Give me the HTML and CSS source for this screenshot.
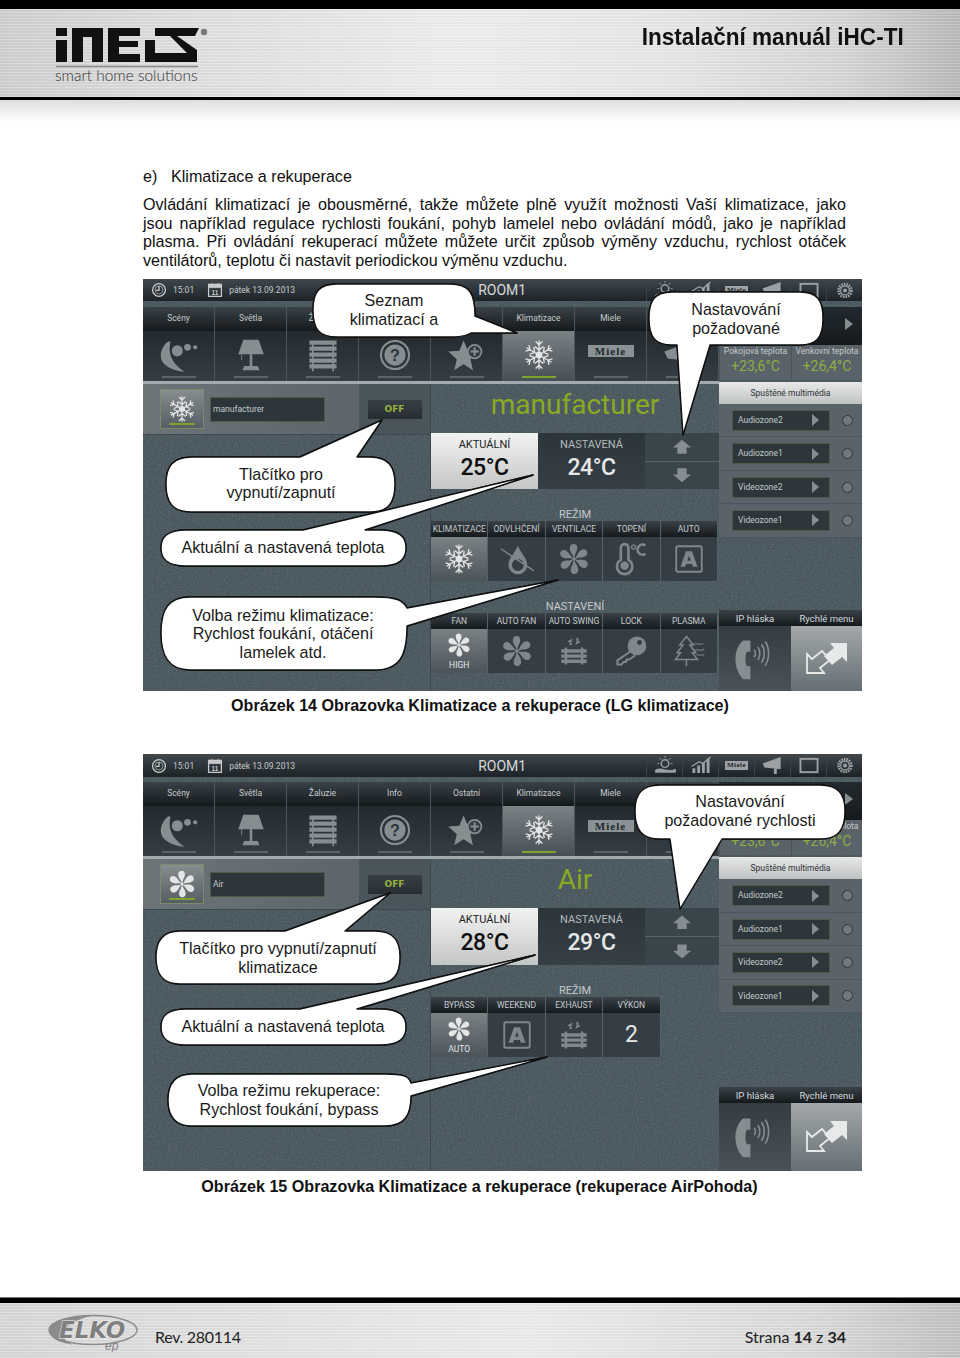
FILE: index.html
```html
<!DOCTYPE html>
<html>
  <head>
    <title>Instalační manuál iHC-TI</title>
    <link rel="stylesheet" href="styles.css">
  </head>
  <body>
    <svg class="defs" xmlns="http://www.w3.org/2000/svg">
      <filter id="grain" x="0" y="0" width="100%" height="100%">
        <feTurbulence type="fractalNoise" baseFrequency=".55" numOctaves="2" seed="4"/>
        <feColorMatrix values="0 0 0 0 .12  0 0 0 0 .15  0 0 0 0 .17  0 0 0 2 -.9"/>
      </filter>
      <g id="flake-arm"><path d="M20 20V3M20 8l-4-4M20 8l4-4M20 14l-5-4M20 14l5-4" fill="none" stroke="currentColor" stroke-width="1.6"/></g>
      <symbol id="i-flake" viewBox="0 0 40 40">
        <use href="#flake-arm"/><use href="#flake-arm" transform="rotate(60 20 20)"/><use href="#flake-arm" transform="rotate(120 20 20)"/>
        <use href="#flake-arm" transform="rotate(180 20 20)"/><use href="#flake-arm" transform="rotate(240 20 20)"/><use href="#flake-arm" transform="rotate(300 20 20)"/>
        <circle cx="20" cy="20" r="4" fill="currentColor"/>
      </symbol>
      <g id="fan-petal"><path d="M20 19C19 15 15 12 15 7 15 3 19 1 22 3 25 5 24 10 22 13 21 15 21 17 20 19Z" fill="currentColor"/></g>
      <symbol id="i-fan" viewBox="0 0 40 40">
        <use href="#fan-petal"/><use href="#fan-petal" transform="rotate(60 20 20)"/><use href="#fan-petal" transform="rotate(120 20 20)"/>
        <use href="#fan-petal" transform="rotate(180 20 20)"/><use href="#fan-petal" transform="rotate(240 20 20)"/><use href="#fan-petal" transform="rotate(300 20 20)"/>
        <circle cx="20" cy="20" r="2" fill="currentColor"/>
      </symbol>
      <symbol id="i-scene" viewBox="0 0 48 40">
        <path d="M11 4C2 12 0 22 6 30 12 36 21 39 31 40 19 32 10 22 14 4Z" fill="currentColor"/>
        <circle cx="22" cy="15" r="6.5" fill="currentColor"/><circle cx="34" cy="11" r="4" fill="currentColor"/><circle cx="43" cy="11" r="2.5" fill="currentColor"/>
      </symbol>
      <symbol id="i-lamp" viewBox="0 0 40 40">
        <path d="M11 2H29L35 19H5Z" fill="currentColor"/><path d="M18.5 19H21.5V33H18.5Z" fill="currentColor"/><path d="M12 33H28L30 38H10Z" fill="currentColor"/>
        <path d="M9 19V26" stroke="currentColor" fill="none"/>
      </symbol>
      <symbol id="i-blinds" viewBox="0 0 40 40">
        <path d="M4 3H36V8H4ZM4 10H36V15H4ZM4 17H36V22H4ZM4 24H36V29H4ZM4 31H36V36H4ZM7 3H9V39H7ZM31 3H33V39H31Z" fill="currentColor"/>
      </symbol>
      <symbol id="i-help" viewBox="0 0 40 40">
        <circle cx="20" cy="20" r="16.5" fill="none" stroke="currentColor" stroke-width="2.5"/>
        <circle cx="20" cy="20" r="12.5" fill="currentColor"/>
        <text x="20" y="27" text-anchor="middle" class="help-mark">?</text>
      </symbol>
      <symbol id="i-star" viewBox="0 0 48 40">
        <path d="M20 3L25 15 38 16 28 25 31 38 20 31 9 38 12 25 2 16 15 15Z" fill="currentColor"/>
        <circle cx="33" cy="16" r="8" fill="#333c42" stroke="currentColor" stroke-width="2"/>
        <path d="M33 11V21M28 16H38" stroke="currentColor" stroke-width="2.4"/>
      </symbol>
      <symbol id="i-drop" viewBox="0 0 40 40">
        <path d="M21 4C17 14 10 19 10 27A11 11 0 0 0 32 27C32 19 25 14 21 4ZM21 20A7 7 0 1 1 21 34 7 7 0 0 1 21 20Z" fill="currentColor" fill-rule="evenodd"/>
        <path d="M1 8L40 34" stroke="currentColor" stroke-width="1.6"/>
      </symbol>
      <symbol id="i-thermo" viewBox="0 0 40 40">
        <path d="M8 7A4.5 4.5 0 0 1 17 7V21A9 9 0 1 1 8 21Z" fill="none" stroke="currentColor" stroke-width="3"/>
        <circle cx="12.5" cy="28" r="5" fill="currentColor"/>
        <circle cx="23" cy="6" r="2.3" fill="none" stroke="currentColor" stroke-width="1.6"/>
        <path d="M37 4A6 6 0 1 0 37 14" fill="none" stroke="currentColor" stroke-width="3"/>
        <path d="M20 17V18M19 21V22" stroke="currentColor" stroke-width="1.2"/>
      </symbol>
      <symbol id="i-auto" viewBox="0 0 40 40">
        <rect x="5" y="5" width="30" height="30" rx="2" fill="none" stroke="currentColor" stroke-width="2.2"/>
        <path d="M16.5 11H23.5L30 29H24.5L23.5 26H16.5L15.5 29H10ZM20 16L18 22H22Z" fill="currentColor" fill-rule="evenodd"/>
      </symbol>
      <symbol id="i-swing" viewBox="0 0 40 40">
        <path d="M5 18H35V22H5ZM5 24H35V28H5ZM5 30H35V34H5ZM9 16H12V36H9ZM28 16H31V36H28Z" fill="currentColor"/>
        <path d="M15 13L17 7 13 9M15 7L17 13M25 5L23 11 27 9M25 11L23 5" fill="none" stroke="currentColor" stroke-width="1.6"/>
      </symbol>
      <symbol id="i-key" viewBox="0 0 40 40">
        <path d="M20 20L4 31V36H9L11 33H14L15 30H18L25 25" fill="none" stroke="currentColor" stroke-width="2.4"/>
        <circle cx="27" cy="14" r="11" fill="currentColor"/><circle cx="30" cy="10" r="2.8" fill="#333c42"/>
      </symbol>
      <symbol id="i-tree" viewBox="0 0 40 40">
        <path d="M17 3L9 13H13L6 22H10L4 30H30L24 22H28L21 13H25ZM17 30V38" fill="none" stroke="currentColor" stroke-width="1.8"/>
        <path d="M25 12C29 10 32 14 37 11M27 19C31 17 33 21 38 18M29 25C32 23 34 27 38 24" fill="none" stroke="currentColor" stroke-width="1.3"/>
      </symbol>
      <symbol id="i-phone" viewBox="0 0 50 46">
        <path d="M12 3C1 13 1 33 12 45H20V31H16C14 26 14 20 16 15H20V3Z" fill="currentColor"/>
        <path d="M24 13C26 15 26 19 24 21M28 10C31 14 31 20 28 24M32 7C36 12 36 22 32 27M36 4C41 11 41 23 36 30" fill="none" stroke="currentColor" stroke-width="1.7"/>
      </symbol>
      <symbol id="i-expand" viewBox="804 636 46 46">
        <path d="M847 643H830L834 648 824 656 832 665 842 657 847 662Z" fill="#e8eaea"/>
        <path d="M807 673H824L820 668 830 660 822 651 812 659 807 654Z" fill="none" stroke="#e8eaea" stroke-width="1.8"/>
      </symbol>
      <symbol id="i-sun" viewBox="0 0 24 20">
        <circle cx="12" cy="8" r="4" fill="none" stroke="currentColor" stroke-width="1.5"/>
        <path d="M12 0V2M4 8H6M18 8H20M6 2L8 4M18 2L16 4M2 15C8 11 14 18 23 14V17H2Z" fill="currentColor" stroke="currentColor"/>
      </symbol>
      <symbol id="i-chart" viewBox="0 0 24 20">
        <path d="M3 18V13H6V18ZM8 18V10H11V18ZM13 18V7H16V18ZM18 18V3H21V18Z" fill="currentColor"/>
        <path d="M2 11L10 6 14 8 22 1" fill="none" stroke="currentColor" stroke-width="1.4"/>
      </symbol>
      <symbol id="i-horn" viewBox="0 0 24 20">
        <path d="M1 8L20 1V14L3 12Z" fill="currentColor"/><path d="M13 13L16 13V19H13Z" fill="currentColor"/>
      </symbol>
      <symbol id="i-window" viewBox="0 0 24 20">
        <rect x="3" y="3" width="18" height="14" fill="none" stroke="currentColor" stroke-width="2"/>
      </symbol>
      <symbol id="i-gear" viewBox="0 0 24 24">
        <circle cx="12" cy="12" r="8" fill="none" stroke="currentColor" stroke-width="3.5" stroke-dasharray="2 1.2"/>
        <circle cx="12" cy="12" r="5.5" fill="none" stroke="currentColor" stroke-width="1.5"/>
        <circle cx="12" cy="12" r="2.5" fill="currentColor"/>
      </symbol>
      <symbol id="i-clock" viewBox="0 0 20 20">
        <circle cx="10" cy="10" r="8" fill="none" stroke="currentColor" stroke-width="1.6"/>
        <circle cx="10" cy="10" r="5" fill="none" stroke="currentColor" stroke-width=".8"/>
        <path d="M10 5V10.5H6" fill="none" stroke="currentColor" stroke-width="1.6"/>
      </symbol>
      <symbol id="i-calendar" viewBox="0 0 20 20">
        <path d="M2 3H18V18H2Z" fill="none" stroke="currentColor" stroke-width="1.6"/>
        <path d="M2 3H18V7H2ZM6 1V4M14 1V4" fill="currentColor" stroke="currentColor"/>
        <text x="10" y="16" text-anchor="middle" class="calendar-day">11</text>
      </symbol>
    </svg>

    <header class="page-header">
      <svg class="inels-logo" viewBox="56 26 156 58" width="156" height="58">
        <path d="M56 28H67V36H56ZM56 40H67V62H56Z" fill="#111"/>
        <path d="M72 28H103V62H92V37H83V62H72Z" fill="#111"/>
        <path d="M108 28H140V36H119V41H138V47H119V54H140V62H108Z" fill="#111"/>
        <path d="M155 28H199L195 36H177L197 50V62H145V40H155V53H187L170 36H155Z" fill="#111"/>
        <circle cx="204" cy="32" r="3.2" fill="#777"/>
        <path d="M56 66.5H198" stroke="#8a8a8a" stroke-width="1.6"/>
      </svg>
      <span class="logo-tagline">smart home solutions</span>
      <h1 class="doc-title">Instalační manuál iHC-TI</h1>
    </header>
    <div class="header-fade"></div>

    <main class="page">
      <h2 class="section-title"><span class="section-num">e)</span>Klimatizace a rekuperace</h2>
      <p class="intro">
        <span class="intro-line">Ovládání klimatizací je obousměrné, takže můžete plně využít možnosti Vaší klimatizace, jako</span>
        <span class="intro-line">jsou například regulace rychlosti foukání, pohyb lamelel nebo ovládání módů, jako je například</span>
        <span class="intro-line">plasma. Při ovládání rekuperací můžete můžete určit způsob výměny vzduchu, rychlost otáček</span>
        <span class="intro-last">ventilátorů, teplotu či nastavit periodickou výměnu vzduchu.</span>
      </p>

      <section class="screen screen-one">
        <svg class="noise"><rect width="100%" height="100%" filter="url(#grain)"/></svg>
        <div class="topbar">
          <svg class="top-icon"><use href="#i-clock"/></svg><span class="top-time">15:01</span>
          <svg class="top-icon"><use href="#i-calendar"/></svg><span class="top-date">pátek 13.09.2013</span>
          <span class="top-room">ROOM1</span>
          <div class="top-actions">
            <span class="top-action"><svg><use href="#i-sun"/></svg></span>
            <span class="top-action"><svg><use href="#i-chart"/></svg></span>
            <span class="top-action"><span class="miele-small">Miele</span></span>
            <span class="top-action"><svg><use href="#i-horn"/></svg></span>
            <span class="top-action"><svg><use href="#i-window"/></svg></span>
            <span class="top-action"><svg><use href="#i-gear"/></svg></span>
          </div>
        </div>
        <div class="screen-body">
          <div class="screen-main">
            <div class="tabs">
              <div class="tab"><div class="tab-head">Scény</div><div class="tab-body"><svg class="tab-icon"><use href="#i-scene"/></svg><i class="tab-bar"></i></div></div>
              <div class="tab"><div class="tab-head">Světla</div><div class="tab-body"><svg class="tab-icon"><use href="#i-lamp"/></svg><i class="tab-bar"></i></div></div>
              <div class="tab"><div class="tab-head">Žaluzie</div><div class="tab-body"><svg class="tab-icon"><use href="#i-blinds"/></svg><i class="tab-bar"></i></div></div>
              <div class="tab"><div class="tab-head"></div><div class="tab-body"><svg class="tab-icon"><use href="#i-help"/></svg><i class="tab-bar"></i></div></div>
              <div class="tab"><div class="tab-head"></div><div class="tab-body"><svg class="tab-icon"><use href="#i-star"/></svg><i class="tab-bar"></i></div></div>
              <div class="tab tab-active"><div class="tab-head">Klimatizace</div><div class="tab-body"><svg class="tab-icon"><use href="#i-flake"/></svg><i class="tab-bar"></i></div></div>
              <div class="tab"><div class="tab-head">Miele</div><div class="tab-body"><span class="miele-logo">Miele</span><i class="tab-bar"></i></div></div>
              <div class="tab"><div class="tab-head"></div><div class="tab-body"><svg class="tab-icon"><use href="#i-horn"/></svg><i class="tab-bar"></i></div></div>
            </div>
            <div class="divider"></div>
            <div class="content">
              <div class="content-left">
                <div class="selector">
                  <div class="selector-device">
                    <div class="device-btn"><svg><use href="#i-flake"/></svg><i class="device-bar"></i></div>
                    <div class="device-name">manufacturer</div>
                  </div>
                  <div class="selector-power"><span class="off-btn">OFF</span></div>
                </div>
              </div>
              <div class="content-mid">
                <div class="unit-title">manufacturer</div>
                <div class="temps">
                  <div class="temp temp-current"><span class="temp-label">AKTUÁLNÍ</span><span class="temp-value">25°C</span></div>
                  <div class="temp temp-set"><span class="temp-label">NASTAVENÁ</span><span class="temp-value">24°C</span></div>
                  <div class="temp-arrows">
                    <div class="arrow-btn"><i class="arrow-up"></i></div>
                    <div class="arrow-btn"><i class="arrow-down"></i></div>
                  </div>
                </div>
                <div class="group-label">REŽIM</div>
                <div class="modes">
                  <div class="mode mode-active"><div class="mode-head">KLIMATIZACE</div><div class="mode-body"><svg class="mode-icon"><use href="#i-flake"/></svg></div></div>
                  <div class="mode"><div class="mode-head">ODVLHČENÍ</div><div class="mode-body"><svg class="mode-icon"><use href="#i-drop"/></svg></div></div>
                  <div class="mode"><div class="mode-head">VENTILACE</div><div class="mode-body"><svg class="mode-icon"><use href="#i-fan"/></svg></div></div>
                  <div class="mode"><div class="mode-head">TOPENÍ</div><div class="mode-body"><svg class="mode-icon"><use href="#i-thermo"/></svg></div></div>
                  <div class="mode"><div class="mode-head">AUTO</div><div class="mode-body"><svg class="mode-icon"><use href="#i-auto"/></svg></div></div>
                </div>
                <div class="group-label">NASTAVENÍ</div>
                <div class="modes">
                  <div class="mode mode-active"><div class="mode-head">FAN</div><div class="mode-body"><svg class="mode-icon mode-icon-small"><use href="#i-fan"/></svg><span class="mode-note">HIGH</span></div></div>
                  <div class="mode"><div class="mode-head">AUTO FAN</div><div class="mode-body"><svg class="mode-icon"><use href="#i-fan"/></svg></div></div>
                  <div class="mode"><div class="mode-head">AUTO SWING</div><div class="mode-body"><svg class="mode-icon"><use href="#i-swing"/></svg></div></div>
                  <div class="mode"><div class="mode-head">LOCK</div><div class="mode-body"><svg class="mode-icon"><use href="#i-key"/></svg></div></div>
                  <div class="mode"><div class="mode-head">PLASMA</div><div class="mode-body"><svg class="mode-icon"><use href="#i-tree"/></svg></div></div>
                </div>
              </div>
            </div>
          </div>
          <aside class="side">
            <div class="pager"><i class="play"></i></div>
            <div class="climate">
              <div class="climate-cell"><span class="climate-label">Pokojová teplota</span><span class="climate-value">+23,6°C</span></div>
              <div class="climate-cell"><span class="climate-label">Venkovní teplota</span><span class="climate-value">+26,4°C</span></div>
            </div>
            <div class="media-head">Spuštěné multimédia</div>
            <div class="media-row"><div class="media-box">Audiozone2<i class="play"></i></div><i class="media-dot"></i></div>
            <div class="media-row"><div class="media-box">Audiozone1<i class="play"></i></div><i class="media-dot"></i></div>
            <div class="media-row"><div class="media-box">Videozone2<i class="play"></i></div><i class="media-dot"></i></div>
            <div class="media-row"><div class="media-box">Videozone1<i class="play"></i></div><i class="media-dot"></i></div>
            <div class="quick">
              <div class="quick-cell"><div class="quick-head">IP hláska</div><div class="quick-body"><svg class="quick-icon"><use href="#i-phone"/></svg></div></div>
              <div class="quick-cell quick-active"><div class="quick-head">Rychlé menu</div><div class="quick-body"><svg class="quick-icon"><use href="#i-expand"/></svg></div></div>
            </div>
          </aside>
        </div>
        <svg class="callouts" viewBox="143 279 719 412">
          <path class="bubble" d="M337 284H450C469 284 475 293 475 316L517 333H471C466 336 460 337 450 337H337C319 337 313 329 313 310 313 292 319 284 337 284Z"/>
          <text class="bubble-text" x="394" y="306">Seznam</text>
          <text class="bubble-text" x="394" y="325">klimatizací a</text>
          <path class="bubble" d="M672 292H800C817 292 823 300 823 318 823 337 817 345 800 345H710L683 435 677 345H672C655 345 649 337 649 318 649 300 655 292 672 292Z"/>
          <text class="bubble-text" x="736" y="315">Nastavování</text>
          <text class="bubble-text" x="736" y="334">požadované</text>
          <path class="bubble" d="M192 457H300L382 420 357 457H370C388 457 395 466 395 484 395 503 388 512 370 512H192C173 512 166 503 166 484 166 466 173 457 192 457Z"/>
          <text class="bubble-text" x="281" y="480">Tlačítko pro</text>
          <text class="bubble-text" x="281" y="498">vypnutí/zapnutí</text>
          <path class="bubble" d="M186 530H303L533 475 365 530H380C400 530 406 537 406 548 406 559 400 566 380 566H186C167 566 161 559 161 548 161 537 167 530 186 530Z"/>
          <text class="bubble-text" x="283" y="553">Aktuální a nastavená teplota</text>
          <path class="bubble" d="M190 597H375C396 597 403 600 407 608L558 580 407 626C407 655 400 670 375 670H190C168 670 161 655 161 633 161 610 168 597 190 597Z"/>
          <text class="bubble-text" x="283" y="621">Volba režimu klimatizace:</text>
          <text class="bubble-text" x="283" y="639">Rychlost foukání, otáčení</text>
          <text class="bubble-text" x="283" y="658">lamelek atd.</text>
        </svg>
      </section>
      <p class="caption caption-one">Obrázek 14 Obrazovka Klimatizace a rekuperace (LG klimatizace)</p>

      <section class="screen screen-two">
        <svg class="noise"><rect width="100%" height="100%" filter="url(#grain)"/></svg>
        <div class="topbar">
          <svg class="top-icon"><use href="#i-clock"/></svg><span class="top-time">15:01</span>
          <svg class="top-icon"><use href="#i-calendar"/></svg><span class="top-date">pátek 13.09.2013</span>
          <span class="top-room">ROOM1</span>
          <div class="top-actions">
            <span class="top-action"><svg><use href="#i-sun"/></svg></span>
            <span class="top-action"><svg><use href="#i-chart"/></svg></span>
            <span class="top-action"><span class="miele-small">Miele</span></span>
            <span class="top-action"><svg><use href="#i-horn"/></svg></span>
            <span class="top-action"><svg><use href="#i-window"/></svg></span>
            <span class="top-action"><svg><use href="#i-gear"/></svg></span>
          </div>
        </div>
        <div class="screen-body">
          <div class="screen-main">
            <div class="tabs">
              <div class="tab"><div class="tab-head">Scény</div><div class="tab-body"><svg class="tab-icon"><use href="#i-scene"/></svg><i class="tab-bar"></i></div></div>
              <div class="tab"><div class="tab-head">Světla</div><div class="tab-body"><svg class="tab-icon"><use href="#i-lamp"/></svg><i class="tab-bar"></i></div></div>
              <div class="tab"><div class="tab-head">Žaluzie</div><div class="tab-body"><svg class="tab-icon"><use href="#i-blinds"/></svg><i class="tab-bar"></i></div></div>
              <div class="tab"><div class="tab-head">Info</div><div class="tab-body"><svg class="tab-icon"><use href="#i-help"/></svg><i class="tab-bar"></i></div></div>
              <div class="tab"><div class="tab-head">Ostatní</div><div class="tab-body"><svg class="tab-icon"><use href="#i-star"/></svg><i class="tab-bar"></i></div></div>
              <div class="tab tab-active"><div class="tab-head">Klimatizace</div><div class="tab-body"><svg class="tab-icon"><use href="#i-flake"/></svg><i class="tab-bar"></i></div></div>
              <div class="tab"><div class="tab-head">Miele</div><div class="tab-body"><span class="miele-logo">Miele</span><i class="tab-bar"></i></div></div>
              <div class="tab"><div class="tab-head"></div><div class="tab-body"><svg class="tab-icon"><use href="#i-horn"/></svg><i class="tab-bar"></i></div></div>
            </div>
            <div class="divider"></div>
            <div class="content">
              <div class="content-left">
                <div class="selector">
                  <div class="selector-device">
                    <div class="device-btn"><svg><use href="#i-fan"/></svg><i class="device-bar"></i></div>
                    <div class="device-name">Air</div>
                  </div>
                  <div class="selector-power"><span class="off-btn">OFF</span></div>
                </div>
              </div>
              <div class="content-mid">
                <div class="unit-title">Air</div>
                <div class="temps">
                  <div class="temp temp-current"><span class="temp-label">AKTUÁLNÍ</span><span class="temp-value">28°C</span></div>
                  <div class="temp temp-set"><span class="temp-label">NASTAVENÁ</span><span class="temp-value">29°C</span></div>
                  <div class="temp-arrows">
                    <div class="arrow-btn"><i class="arrow-up"></i></div>
                    <div class="arrow-btn"><i class="arrow-down"></i></div>
                  </div>
                </div>
                <div class="group-label">REŽIM</div>
                <div class="modes">
                  <div class="mode mode-active"><div class="mode-head">BYPASS</div><div class="mode-body"><svg class="mode-icon mode-icon-small"><use href="#i-fan"/></svg><span class="mode-note">AUTO</span></div></div>
                  <div class="mode"><div class="mode-head">WEEKEND</div><div class="mode-body"><svg class="mode-icon"><use href="#i-auto"/></svg></div></div>
                  <div class="mode"><div class="mode-head">EXHAUST</div><div class="mode-body"><svg class="mode-icon"><use href="#i-swing"/></svg></div></div>
                  <div class="mode"><div class="mode-head">VÝKON</div><div class="mode-body"><span class="mode-number">2</span></div></div>
                </div>
              </div>
            </div>
          </div>
          <aside class="side">
            <div class="pager"><i class="play"></i></div>
            <div class="climate">
              <div class="climate-cell"><span class="climate-label">Pokojová teplota</span><span class="climate-value">+23,6°C</span></div>
              <div class="climate-cell"><span class="climate-label">Venkovní teplota</span><span class="climate-value">+26,4°C</span></div>
            </div>
            <div class="media-head">Spuštěné multimédia</div>
            <div class="media-row"><div class="media-box">Audiozone2<i class="play"></i></div><i class="media-dot"></i></div>
            <div class="media-row"><div class="media-box">Audiozone1<i class="play"></i></div><i class="media-dot"></i></div>
            <div class="media-row"><div class="media-box">Videozone2<i class="play"></i></div><i class="media-dot"></i></div>
            <div class="media-row"><div class="media-box">Videozone1<i class="play"></i></div><i class="media-dot"></i></div>
            <div class="quick">
              <div class="quick-cell"><div class="quick-head">IP hláska</div><div class="quick-body"><svg class="quick-icon"><use href="#i-phone"/></svg></div></div>
              <div class="quick-cell quick-active"><div class="quick-head">Rychlé menu</div><div class="quick-body"><svg class="quick-icon"><use href="#i-expand"/></svg></div></div>
            </div>
          </aside>
        </div>
        <svg class="callouts" viewBox="143 754 719 417">
          <path class="bubble" d="M660 785H820C838 785 845 794 845 811 845 830 838 839 820 839H722L680 909 670 839H660C642 839 635 830 635 811 635 794 642 785 660 785Z"/>
          <text class="bubble-text" x="740" y="807">Nastavování</text>
          <text class="bubble-text" x="740" y="826">požadované rychlosti</text>
          <path class="bubble" d="M180 931H285L390 893 345 931H375C393 931 400 940 400 957 400 975 393 984 375 984H180C163 984 156 975 156 957 156 940 163 931 180 931Z"/>
          <text class="bubble-text" x="278" y="954">Tlačítko pro vypnutí/zapnutí</text>
          <text class="bubble-text" x="278" y="973">klimatizace</text>
          <path class="bubble" d="M186 1009H300L535 955 357 1009H380C400 1009 406 1016 406 1027 406 1038 400 1045 380 1045H186C167 1045 161 1038 161 1027 161 1016 167 1009 186 1009Z"/>
          <text class="bubble-text" x="283" y="1032">Aktuální a nastavená teplota</text>
          <path class="bubble" d="M192 1074H385C403 1074 409 1076 411 1083L547 1057 411 1096C411 1116 404 1126 385 1126H192C175 1126 168 1116 168 1100 168 1084 175 1074 192 1074Z"/>
          <text class="bubble-text" x="289" y="1096">Volba režimu rekuperace:</text>
          <text class="bubble-text" x="289" y="1115">Rychlost foukání, bypass</text>
        </svg>
      </section>
      <p class="caption caption-two">Obrázek 15 Obrazovka Klimatizace a rekuperace (rekuperace AirPohoda)</p>
    </main>

    <footer class="page-footer">
      <svg class="elko-logo" viewBox="0 0 92 38" width="92" height="38">
        <ellipse cx="46" cy="16" rx="44" ry="14.5" fill="none" stroke="#8c8c8c" stroke-width="1.4"/>
        <path d="M46 1.5C20 1.5 2 8 2 16 2 25 14 29 26 30.5 10 25 12 9 46 1.5Z" fill="#8c8c8c"/>
        <text x="12" y="24" class="elko-name">ELKO</text>
        <text x="58" y="36" class="elko-ep">ep</text>
      </svg>
      <span class="footer-rev">Rev. 280114</span>
      <span class="footer-page">Strana <b>14</b> z <b>34</b></span>
    </footer>
  </body>
</html>
```

FILE: styles.css
```css
html, body {
  margin: 0;
  padding: 0;
}
body {
  width: 960px;
  height: 1358px;
  display: flex;
  flex-direction: column;
  background: #fff;
  color: #111;
  font-family: "Liberation Sans", Arial, sans-serif;
  font-size: 16.13px;
  line-height: 18.4px;
  overflow: hidden;
}
.defs {
  position: absolute;
  width: 0;
  height: 0;
}
.help-mark {
  font: bold 19px "Liberation Sans", sans-serif;
  fill: #2c343a;
}
.calendar-day {
  font: bold 8px "Liberation Sans", sans-serif;
  fill: currentColor;
}

/* page header and footer */
.page-header {
  box-sizing: border-box;
  height: 100px;
  position: relative;
  display: flex;
  justify-content: flex-end;
  padding: 9px 56px 0 56px;
  border-top: 9px solid #000;
  border-bottom: 3px solid #000;
  background:
    repeating-linear-gradient(0deg, rgba(255,255,255,.14) 0 1px, rgba(0,0,0,.03) 1px 3px),
    linear-gradient(90deg, #d2d2d2, #e0e0e0 18%, #f0f0f0 48%, #e8e8e8 70%, #d8d8d8 88%, #bcbcbc);
}
.inels-logo {
  position: absolute;
  left: 56px;
  top: 17px;
}
.logo-tagline {
  position: absolute;
  left: 55px;
  top: 57px;
  font: 300 15.4px/18px Lato, sans-serif;
  color: #333;
  white-space: nowrap;
}
.doc-title {
  margin: 5px 0 0;
  font-size: 24px;
  line-height: 28px;
  font-weight: bold;
  color: #111;
  transform: scaleX(.94);
  transform-origin: right center;
}
.header-fade {
  height: 22px;
  background: linear-gradient(180deg, #dedede, #fff);
}
.page-footer {
  box-sizing: border-box;
  height: 60px;
  margin-top: auto;
  position: relative;
  display: flex;
  justify-content: space-between;
  padding: 25px 114px 0 155px;
  border-top: 5px solid #000;
  box-shadow: 0 -1px 0 #777;
  background:
    repeating-linear-gradient(0deg, rgba(255,255,255,.14) 0 1px, rgba(0,0,0,.03) 1px 3px),
    linear-gradient(90deg, #dadada, #e6e6e6 30%, #eeeeee 55%, #dcdcdc 85%, #c4c4c4);
  font-family: Lato, sans-serif;
  font-size: 16px;
  color: #222;
}
.footer-rev {
  letter-spacing: -.3px;
}
.elko-logo {
  position: absolute;
  left: 47px;
  top: 11px;
}
.elko-name {
  font: italic bold 23px "DejaVu Sans", sans-serif;
  fill: #7f7f7f;
  stroke: #efefef;
  stroke-width: 1px;
  paint-order: stroke;
}
.elko-ep {
  font: italic 12px "Liberation Sans", sans-serif;
  fill: #7f7f7f;
}

/* document text */
.page {
  padding: 45px 114px 0 143px;
  width: 703px;
}
.section-title {
  margin: 0 0 10px;
  font-size: inherit;
  font-weight: normal;
}
.section-num {
  display: inline-block;
  width: 28px;
}
.intro {
  margin: 0 0 10px;
}
.intro-line {
  display: block;
  text-align: justify;
  text-align-last: justify;
}
.intro-last {
  display: block;
}
.caption {
  margin: 5px 29px 0 0;
  font-weight: bold;
  text-align: center;
  white-space: nowrap;
}
.caption-one {
  margin-bottom: 40px;
}
.caption-two {
  margin-left: -30px;
  margin-right: 0;
  margin-top: 6px;
}

/* touch panel screenshot */
.screen {
  position: relative;
  width: 719px;
  height: 412px;
  display: flex;
  flex-direction: column;
  background: #4a585f;
  font-family: Roboto, sans-serif;
  color: #c6cacc;
}
.screen-two {
  height: 417px;
}
.noise {
  position: absolute;
  left: 0;
  top: 0;
  width: 100%;
  height: 100%;
}
.topbar {
  position: relative;
  flex: none;
  height: 22px;
  display: flex;
  align-items: center;
  padding-left: 8px;
  background: linear-gradient(180deg, #3f474d, #1d2327);
  font-size: 8.5px;
}
.screen-two .topbar {
  height: 23px;
}
.top-icon {
  width: 16px;
  height: 16px;
  color: #c6cacc;
}
.top-time {
  margin: 0 13px 0 6px;
}
.top-date {
  margin-left: 6px;
  width: 77px;
  white-space: nowrap;
}
.top-room {
  margin-left: 172px;
  font-size: 14px;
  color: #d6d9da;
}
.top-actions {
  margin-left: auto;
  width: 216px;
  display: grid;
  grid-template-columns: repeat(6, 1fr);
  height: 100%;
}
.top-action {
  display: flex;
  align-items: center;
  justify-content: center;
  border-left: 1px solid #3b4349;
  color: #9ba1a4;
}
.top-action svg {
  width: 24px;
  height: 19px;
}
.miele-small {
  padding: 0 2px;
  background: #9ba1a4;
  color: #222;
  font: bold 7px/9px "Liberation Serif", serif;
  letter-spacing: .5px;
}
.screen-body {
  position: relative;
  flex: 1;
  display: flex;
  min-height: 0;
}
.screen-main {
  width: 576px;
  display: flex;
  flex-direction: column;
}
.tabs {
  flex: none;
  height: 74px;
  margin-top: 6px;
  display: grid;
  grid-template-columns: repeat(8, 72px);
}
.screen-two .tabs {
  margin-top: 5px;
}
.tab {
  border-right: 1px solid #4c565c;
  display: flex;
  flex-direction: column;
}
.tab-head {
  height: 24px;
  padding-top: 6px;
  box-sizing: border-box;
  text-align: center;
  font-size: 8.5px;
  line-height: 10px;
  background: linear-gradient(180deg, #3a4248, #14191c);
}
.tab-body {
  flex: 1;
  display: flex;
  flex-direction: column;
  align-items: center;
  justify-content: flex-end;
  background: linear-gradient(180deg, #232a2f, #353e44);
  color: #868e92;
}
.tab-icon {
  width: 44px;
  height: 34px;
}
.tab-bar {
  width: 34px;
  height: 2px;
  margin: 4px 0 3px;
  background: #5a6368;
}
.tab-active .tab-body {
  background: linear-gradient(180deg, #7b8286, #464f55);
  color: #e4e6e6;
}
.tab-active .tab-bar {
  background: #7ea32c;
}
.miele-logo {
  width: 46px;
  height: 12px;
  margin-bottom: 15px;
  background: #8b9296;
  color: #23292d;
  text-align: center;
  font: bold 11px/12px "Liberation Serif", serif;
  letter-spacing: 1px;
}
.divider {
  flex: none;
  height: 3px;
  background: #a3aaad;
}
.content {
  flex: 1;
  display: flex;
}
.content-left {
  width: 288px;
  border-right: 1px solid #3d4950;
  box-sizing: border-box;
}
.selector {
  height: 50px;
  display: flex;
  border-bottom: 1px solid #3d4950;
}
.selector-device {
  width: 216px;
  display: flex;
  align-items: center;
  gap: 6px;
  padding-left: 17px;
  box-sizing: border-box;
  background: linear-gradient(90deg, #6c7478, #5b656a);
}
.device-btn {
  position: relative;
  box-sizing: border-box;
  width: 44px;
  height: 40px;
  display: flex;
  align-items: center;
  justify-content: center;
  border: 1px solid #7c8a6a;
  background: linear-gradient(180deg, #878d90, #555e63);
  color: #e4e6e6;
}
.device-btn svg {
  width: 30px;
  height: 30px;
}
.device-bar {
  position: absolute;
  left: 8px;
  right: 8px;
  bottom: 3px;
  height: 2px;
  background: #7ea32c;
}
.device-name {
  box-sizing: border-box;
  width: 115px;
  height: 25px;
  padding-left: 2px;
  border: 1px solid #4d5a45;
  background: #2c363b;
  color: #c6cacc;
  font-size: 8.5px;
  line-height: 23px;
}
.selector-power {
  flex: 1;
  display: flex;
  align-items: center;
  justify-content: center;
  background: #4a555b;
}
.off-btn {
  width: 54px;
  height: 19px;
  text-align: center;
  background: linear-gradient(180deg, #384046, #262d32);
  color: #97b23b;
  font: bold 9px/19px "DejaVu Sans", sans-serif;
}
.content-mid {
  width: 288px;
}
.unit-title {
  height: 49px;
  text-align: center;
  font-size: 28px;
  line-height: 42px;
  color: #87ab22;
}
.temps {
  height: 56px;
  display: grid;
  grid-template-columns: 107px 107px 74px;
}
.screen-two .temps {
  height: 57px;
}
.temp {
  display: flex;
  flex-direction: column;
  align-items: center;
  padding-top: 5px;
}
.temp-current {
  background: linear-gradient(180deg, #f2f2f2, #c4c6c6);
  color: #222;
}
.temp-set {
  background: linear-gradient(180deg, #2c353a, #353f45);
  color: #e6e8e8;
}
.temp-label {
  font-size: 11px;
  line-height: 13px;
}
.temp-set .temp-label {
  color: #b4babc;
}
.temp-value {
  margin-top: 2px;
  font-size: 23px;
  font-weight: 500;
  line-height: 29px;
  letter-spacing: -.5px;
}
.temp-current .temp-value {
  color: #0e0e0e;
}
.temp-arrows {
  display: grid;
  grid-template-rows: 1fr 1fr;
  gap: 1px;
  background: #596268;
}
.arrow-btn {
  display: flex;
  align-items: center;
  justify-content: center;
  background: #3a454b;
}
.arrow-up, .arrow-down {
  width: 18px;
  height: 14px;
  background: #868e92;
}
.arrow-up {
  clip-path: polygon(50% 0, 100% 55%, 76% 55%, 76% 100%, 24% 100%, 24% 55%, 0 55%);
}
.arrow-down {
  clip-path: polygon(24% 0, 76% 0, 76% 45%, 100% 45%, 50% 100%, 0 45%, 24% 45%);
}
.group-label {
  height: 32px;
  box-sizing: border-box;
  padding-top: 19px;
  text-align: center;
  font-size: 11px;
  line-height: 13px;
  color: #c6cacc;
}
.modes {
  display: grid;
  grid-template-columns: repeat(5, 57.4px);
  height: 60px;
}
.mode {
  display: flex;
  flex-direction: column;
  border-right: 1px solid #56626a;
}
.mode-head {
  height: 16px;
  text-align: center;
  font-size: 8.5px;
  line-height: 16px;
  white-space: nowrap;
  background: linear-gradient(180deg, #3a4248, #14191c);
}
.mode-body {
  flex: 1;
  display: flex;
  flex-direction: column;
  align-items: center;
  justify-content: center;
  background: #343e44;
  color: #7f878b;
}
.mode-active .mode-body {
  background: linear-gradient(180deg, #7b8286, #4b5459);
  color: #e4e6e6;
}
.mode-icon {
  width: 34px;
  height: 34px;
}
.mode-icon-small {
  width: 26px;
  height: 26px;
}
.mode-note {
  margin-top: 2px;
  font-size: 8.5px;
  line-height: 11px;
}
.mode-number {
  color: #e6e8e8;
  font-size: 23px;
}
.side {
  width: 143px;
  display: flex;
  flex-direction: column;
  font-size: 8.5px;
}
.pager {
  height: 38px;
  margin-top: 6px;
  box-sizing: border-box;
  display: flex;
  align-items: center;
  justify-content: flex-end;
  padding: 0 9px 4px 0;
  background: linear-gradient(180deg, #232a2f, #14191c);
}
.screen-two .pager {
  margin-top: 5px;
}
.play {
  width: 0;
  height: 0;
  border-style: solid;
  border-width: 6px 0 6px 8px;
  border-color: transparent transparent transparent #868e92;
}
.climate {
  height: 35px;
  display: grid;
  grid-template-columns: 72px 71px;
  background: #596369;
}
.climate-cell {
  display: flex;
  flex-direction: column;
  align-items: center;
  padding-top: 1px;
  border-left: 1px solid #4a5359;
  white-space: nowrap;
}
.climate-label {
  line-height: 11px;
  color: #c6cacc;
}
.climate-value {
  font-size: 14px;
  line-height: 18px;
  color: #8fae45;
}
.media-head {
  height: 22px;
  margin-top: 2px;
  text-align: center;
  font-size: 8.5px;
  line-height: 22px;
  color: #2c3236;
  background: linear-gradient(180deg, #e8e8e8, #bfc2c2);
}
.media-row {
  height: 33.4px;
  box-sizing: border-box;
  display: flex;
  align-items: center;
  gap: 12px;
  padding-left: 13px;
  border-bottom: 1px solid #4c565c;
  background: #596369;
}
.media-box {
  box-sizing: border-box;
  width: 98px;
  height: 21px;
  display: flex;
  align-items: center;
  justify-content: space-between;
  padding: 0 10px 0 5px;
  border: 1px solid #4d5a45;
  background: #2c363b;
  color: #c6cacc;
  font-size: 8.5px;
}
.media-box .play {
  border-width: 6px 0 6px 7px;
}
.media-dot {
  box-sizing: border-box;
  width: 11px;
  height: 11px;
  border: 1px solid #2c363b;
  border-radius: 50%;
  background: #6f797e;
}
.quick {
  margin-top: auto;
  height: 81px;
  display: grid;
  grid-template-columns: 72px 71px;
}
.screen-two .quick {
  height: 84px;
}
.quick-cell {
  display: flex;
  flex-direction: column;
}
.quick-head {
  height: 16px;
  text-align: center;
  font-size: 9.5px;
  line-height: 17px;
  color: #d6d9da;
  background: linear-gradient(180deg, #3a4248, #14191c);
}
.quick-body {
  flex: 1;
  display: flex;
  align-items: center;
  justify-content: center;
  background: linear-gradient(180deg, #343d43, #485258);
  color: #868e92;
}
.quick-active .quick-body {
  background: linear-gradient(180deg, #a3a8ab, #656f74);
}
.quick-icon {
  width: 46px;
  height: 46px;
}

/* callouts lying over the panel */
.callouts {
  position: absolute;
  left: 0;
  top: 0;
  width: 100%;
  height: 100%;
}
.bubble {
  fill: #fff;
  stroke: #111;
  stroke-width: 1.4;
  stroke-linejoin: round;
  filter: drop-shadow(.6px .8px 0 #111);
}
.bubble-text {
  font: 16.1px "Liberation Sans", Arial, sans-serif;
  fill: #1a1a1a;
  text-anchor: middle;
}
```
